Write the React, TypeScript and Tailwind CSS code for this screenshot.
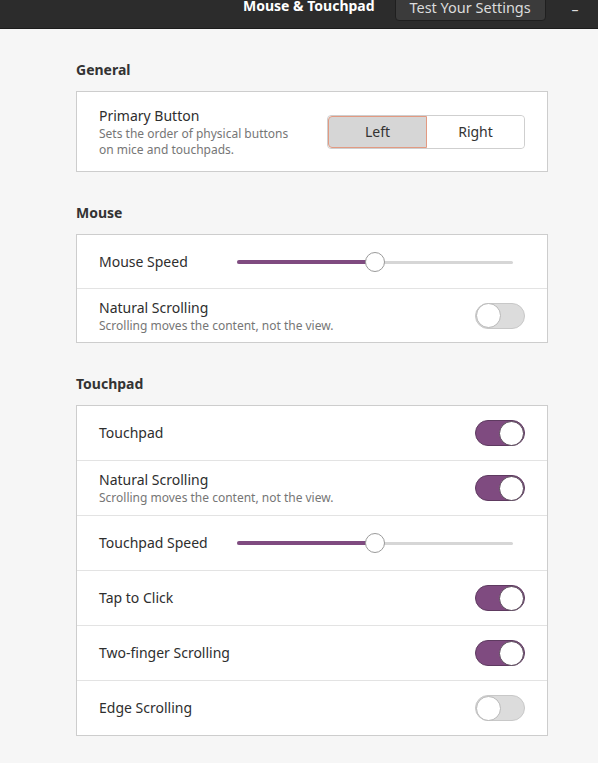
import React from "react";

const font = { fontFamily: '"Noto Sans", "Open Sans", sans-serif' };

function Toggle({ on }: { on: boolean }) {
    return (
        <div
            className={
                on
                    ? "flex h-[26px] w-[50px] items-center justify-end rounded-full border border-[#5e3a60] bg-[#7f4b80]"
                    : "flex h-[26px] w-[50px] items-center justify-start rounded-full border border-[#c8c8c8] bg-[#dcdcdc]"
            }
        >
            <div
                className={
                    on
                        ? "h-[25px] w-[25px] rounded-full border border-[#5a4a5a] bg-white"
                        : "h-[25px] w-[25px] rounded-full border border-[#b8b8b8] bg-white"
                }
            />
        </div>
    );
}

function Slider() {
    return (
        <div className="relative h-[20px] w-[276px]">
            <div className="absolute left-0 right-0 top-[9px] h-[3px] rounded-full bg-[#d6d6d6]" />
            <div className="absolute left-0 top-[8px] h-[4px] w-[138px] rounded-full bg-[#7f4b80]" />
            <div className="absolute left-[128px] top-0 h-[20px] w-[20px] rounded-full border border-[#9a9a9a] bg-white" />
        </div>
    );
}

function Row({ label, desc, h = "h-[55px]", last, children }: { label: string; desc?: string; h?: string; last?: boolean; children: React.ReactNode }) {
    return (
        <div className={`flex ${h} items-center justify-between pl-[22px] pr-[22px] ${last ? "" : "border-b border-[#e3e3e3]"}`}>
            <div className="flex flex-col">
                <span className="text-[14px] leading-[20px] text-[#2e2e2e]">{label}</span>
                {desc && <span className="text-[12px] leading-[16px] text-[#767676]">{desc}</span>}
            </div>
            {children}
        </div>
    );
}

function Section({ title, children }: { title: string; children: React.ReactNode }) {
    return (
        <div className="flex flex-col">
            <p className="mb-[11px] h-[20px] text-[14px] font-bold leading-[20px] text-[#333333]">{title}</p>
            <div className="border border-[#cdcdcd] bg-white">{children}</div>
        </div>
    );
}

export default function App() {
    return (
        <div className="flex h-[763px] w-[598px] flex-col overflow-hidden bg-[#f6f6f6]" style={font}>
            <div className="flex h-[29px] shrink-0 items-start border-b border-[#1c1c1c] bg-[#2c2c2c]">
                <span className="ml-[243px] -mt-[3px] text-[14px] font-bold leading-[18px] text-white">Mouse &amp; Touchpad</span>
                <div className="ml-[20px] -mt-[2px] flex h-[23px] w-[151px] items-start justify-center rounded-b-[4px] border border-[#1f1f1f] bg-[#3b3b3b]">
                    <span className="-mt-[1px] text-[14.5px] leading-[18px] text-[#dcdcdc]">Test Your Settings</span>
                </div>
                <span className="ml-[26px] mt-[1px] text-[14px] leading-[18px] text-[#dddddd]">–</span>
            </div>

            <div className="box-content flex w-[472px] flex-col gap-[31px] pl-[76px] pt-[31px]">
                <Section title="General">
                    <div className="flex h-[79px] items-center justify-between pl-[22px] pr-[22px]">
                        <div className="flex flex-col">
                            <span className="text-[14px] leading-[20px] text-[#2e2e2e]">Primary Button</span>
                            <span className="text-[12px] leading-[16px] text-[#767676]">Sets the order of physical buttons</span>
                            <span className="text-[12px] leading-[16px] text-[#767676]">on mice and touchpads.</span>
                        </div>
                        <div className="flex h-[34px] w-[198px] rounded-[4px] border border-[#cfcfcf]">
                            <div className="flex flex-1 items-center justify-center rounded-l-[4px] border-[1.5px] border-[#e29a82] bg-[#d6d6d6] text-[14px] text-[#333]">
                                Left
                            </div>
                            <div className="flex flex-1 items-center justify-center rounded-r-[4px] bg-white text-[14px] text-[#333]">
                                Right
                            </div>
                        </div>
                    </div>
                </Section>

                <Section title="Mouse">
                    <Row label="Mouse Speed" h="h-[54px]">
                        <div className="mr-[12px]">
                            <Slider />
                        </div>
                    </Row>
                    <Row label="Natural Scrolling" desc="Scrolling moves the content, not the view." h="h-[53px]" last>
                        <Toggle on={false} />
                    </Row>
                </Section>

                <Section title="Touchpad">
                    <Row label="Touchpad">
                        <Toggle on />
                    </Row>
                    <Row label="Natural Scrolling" desc="Scrolling moves the content, not the view.">
                        <Toggle on />
                    </Row>
                    <Row label="Touchpad Speed">
                        <div className="mr-[12px]">
                            <Slider />
                        </div>
                    </Row>
                    <Row label="Tap to Click">
                        <Toggle on />
                    </Row>
                    <Row label="Two-finger Scrolling">
                        <Toggle on />
                    </Row>
                    <Row label="Edge Scrolling" h="h-[54px]" last>
                        <Toggle on={false} />
                    </Row>
                </Section>
            </div>
        </div>
    );
}
